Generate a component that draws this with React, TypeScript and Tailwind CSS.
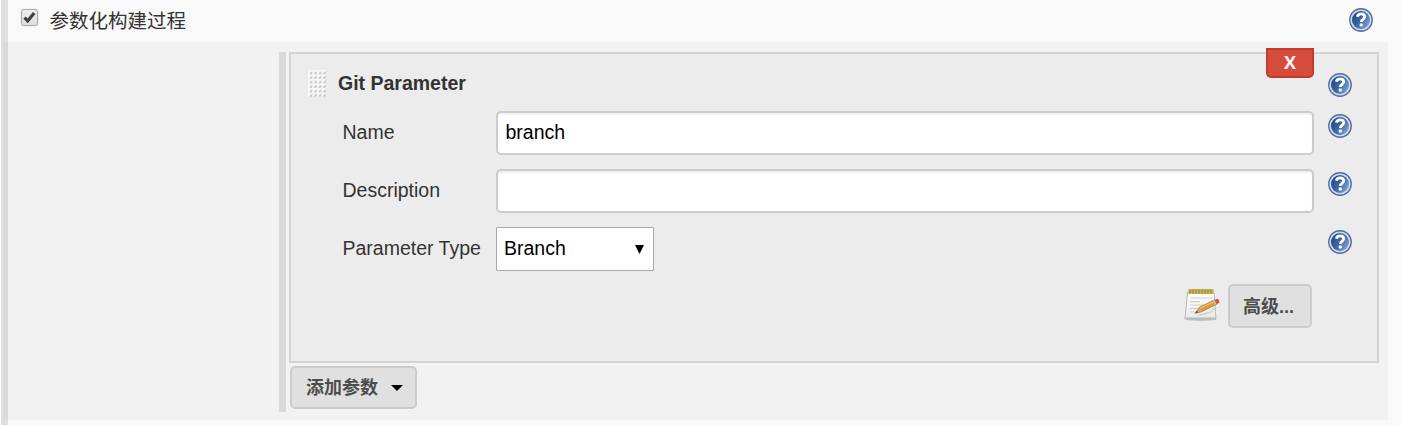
import type { ReactNode } from 'react';

function HelpIcon() {
  return (
    <svg viewBox="0 0 24 24" className="block h-6 w-6 shrink-0" role="img">
      <defs>
        <linearGradient id="help-fill" x1="0" y1="0.2" x2="1" y2="0.8">
          <stop offset="0" stopColor="#1f4585" />
          <stop offset="0.5" stopColor="#4068a6" />
          <stop offset="1" stopColor="#86a6d2" />
        </linearGradient>
      </defs>
      <circle cx="12" cy="12" r="11.9" fill="#4d6c9e" />
      <circle cx="12" cy="12" r="10.6" fill="#cdd9e9" />
      <circle cx="12" cy="12" r="9" fill="url(#help-fill)" />
      <path
        d="M8.4 8.7C8.7 6.6 10.2 5.8 12.1 5.8c2.2 0 3.6 1.1 3.6 3 0 2.5-3.4 2.6-3.4 5.2"
        fill="none"
        stroke="#fff"
        strokeWidth="2.8"
      />
      <rect x="10.7" y="15.4" width="3.1" height="3.1" rx="0.7" fill="#fff" />
    </svg>
  );
}

function NotepadIcon() {
  return (
    <svg viewBox="0 0 36 36" className="block h-9 w-9 shrink-0">
      <defs>
        <linearGradient id="paper" x1="0" y1="0" x2="0" y2="1">
          <stop offset="0" stopColor="#ffffff" />
          <stop offset="1" stopColor="#e9e9e9" />
        </linearGradient>
      </defs>
      <ellipse cx="17" cy="32.5" rx="15" ry="1.5" fill="#c4c4c4" />
      <path d="M3.5 5H30l2 27H1z" fill="url(#paper)" stroke="#b9b9b9" strokeWidth="1" />
      <path d="M1.2 30.5h30.6v1.8H1.2z" fill="#b9b9b7" />
      <path d="M4.5 2.2h25v4.6h-25z" fill="#c5b24d" />
      <path d="M6 2v5M9 2v5M12 2v5M15 2v5M18 2v5M21 2v5M24 2v5M27 2v5" stroke="#a3913a" strokeWidth="1.2" />
      <path d="M6 11h22M6 14.6h10M6 18h14M6 21.5h9M6 25h6" stroke="#cfcfcf" strokeWidth="1.2" />
      <path d="M14 28.5l13-3.5 3-4" stroke="#bdbdbd" strokeWidth="1.5" fill="none" opacity=".6" />
      <path d="M11.3 26.3l4.2-6.1 15-7.3 2.3 4.3-15 7.4z" fill="#dc9d3d" stroke="#a8722c" strokeWidth=".8" />
      <path d="M16 21.3l15-7.4" stroke="#f0c470" strokeWidth="1.1" />
      <path d="M11.3 26.3l4.2-6.1 2.3 4.4z" fill="#cfa266" />
      <path d="M11.3 26.3l1.7-2.5 1 1.8z" fill="#4b3a27" />
      <path d="M28.8 13.8l2-1 2.2 4.3-2 1z" fill="#bdbdbd" />
      <path d="M30.6 12.9l2-.9c2-.5 3.5 2.4 2.3 3.9l-2 1.3z" fill="#e34a43" />
    </svg>
  );
}

function DragHandle() {
  return (
    <svg width="18" height="27" className="block shrink-0">
      <defs>
        <pattern id="grip" width="4.5" height="4.5" patternUnits="userSpaceOnUse">
          <rect width="4.5" height="4.5" fill="#f8f8f8" />
          <path d="M1.5 3.9L3.9 1.5v2.4z" fill="#b2b2b2" stroke="#c4c4c4" strokeWidth=".5" />
        </pattern>
      </defs>
      <rect width="18" height="27" fill="url(#grip)" />
    </svg>
  );
}

function FormRow({ label, children }: { label: string; children: ReactNode }) {
  return (
    <div className="flex h-11 items-start">
      <label className="w-[153.5px] shrink-0 pt-[6px] leading-[30px]">{label}</label>
      <div className="flex w-[818px] shrink-0">{children}</div>
      <div className="ml-[14px] mt-[3px]">
        <HelpIcon />
      </div>
    </div>
  );
}

const inputStyle =
  "h-11 w-full rounded-[5px] border-2 border-[#ccc] bg-white px-[7.5px] pb-[2px] text-black shadow-[inset_0_2px_2px_rgba(0,0,0,0.06)] outline-none";
const buttonStyle =
  "flex items-center rounded-[5px] border-2 border-[#ccc] bg-[#e0e0e0] text-[18px] font-bold text-[#4d4d4d]";

export default function App() {
  return (
    <div className="flex h-[425px] w-[1401px] overflow-hidden bg-[#f9f9f9] font-['Liberation_Sans','Noto_Sans_CJK_SC',sans-serif] text-[19.5px] text-[#333]">
      <div className="flex w-2 shrink-0 flex-col items-end border-l border-white bg-[#dfdfdf] pt-[42px]">
        <div className="h-[378px] w-1 bg-[#d9d9d9]" />
      </div>
      <div className="w-[1380px] shrink-0">
        <div className="flex h-[42px] items-start">
          <div className="ml-[13px] mt-[9px] flex h-[17px] w-[17px] items-center justify-center rounded-[3px] border border-[#aaa] bg-linear-to-b from-[#eee] to-[#ddd] shadow-[0_0_1px_#999]">
            <svg viewBox="0 0 13 13" className="h-[13px] w-[13px]">
              <path d="M1.5 6.6l3.2 3.3 6.5-8" fill="none" stroke="#404040" strokeWidth="3.2" />
            </svg>
          </div>
          <span className="ml-[11.5px] mt-[6px] leading-[30px]">参数化构建过程</span>
          <div className="ml-auto mr-[15px] mt-2">
            <HelpIcon />
          </div>
        </div>
        <div className="flex h-[378px] bg-[#f2f2f2] pl-[271px] pt-[10px]">
          <div className="h-[360px] w-[7px] bg-[#d9d9d9]" />
          <div className="ml-[3px] w-[1090px]">
            <section className="relative h-[311px] border-2 border-[#d3d3d3] bg-[#ececec]">
              <button className="absolute right-[63px] top-[-6px] h-[30px] w-12 rounded-b-[5px] border-2 border-[#c03b2c] bg-[#d54c3b] pb-[2px] font-['Open_Sans',sans-serif] text-[18px] font-bold leading-[24px] text-[#f4f4f4]">
                X
              </button>
              <div className="flex h-[57px] items-start pl-[17px] pt-4">
                <DragHandle />
                <strong className="ml-[12px] mt-[-2px] leading-[30px]">Git Parameter</strong>
                <div className="ml-auto mr-[25px] mt-[3px]">
                  <HelpIcon />
                </div>
              </div>
              <div className="flex flex-col gap-[14px] pl-[51.5px]">
                <FormRow label="Name">
                  <input className={inputStyle} defaultValue="branch" />
                </FormRow>
                <FormRow label="Description">
                  <input className={inputStyle} />
                </FormRow>
                <FormRow label="Parameter Type">
                  <div className="flex h-11 w-[158px] items-center justify-between rounded-[1px] border border-[#a9a9a9] bg-white pl-[7px] pr-[9px] text-black">
                    <span>Branch</span>
                    <svg width="9" height="9" className="mt-px">
                      <path d="M0 0h9L4.5 9z" />
                    </svg>
                  </div>
                </FormRow>
              </div>
              <div className="mr-[65px] mt-[13px] flex justify-end gap-[8px]">
                <div className="mt-[3px]">
                  <NotepadIcon />
                </div>
                <button className={buttonStyle + " h-11 w-[84px] pl-[13px] pt-[3px]"}>高级...</button>
              </div>
            </section>
            <button className={buttonStyle + " ml-px mt-[3px] h-[43px] w-[127px] gap-[13px] pl-[14px]"}>
              <span className="pt-[2px]">添加参数</span>
              <svg width="12" height="6">
                <path d="M0 0h12L6 6z" fill="#000" />
              </svg>
            </button>
          </div>
        </div>
      </div>
    </div>
  );
}
